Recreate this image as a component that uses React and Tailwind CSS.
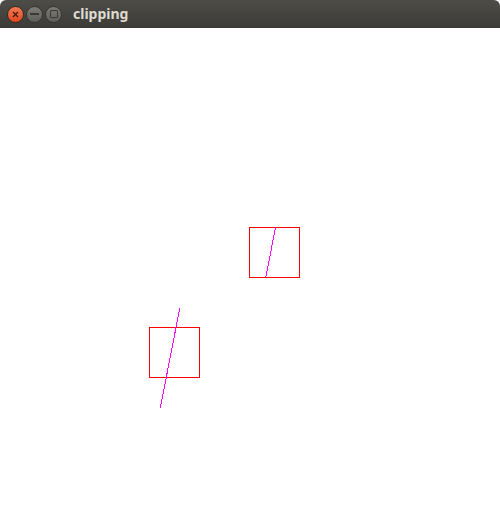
export default function App() {
  return (
    <div className="w-[500px] h-[528px] flex flex-col bg-white overflow-hidden">
      <div className="h-[28px] shrink-0 rounded-t-[6px] bg-gradient-to-b from-[#4d4c47] to-[#3c3b37] flex items-center pl-[7px]">
        <div className="flex items-center gap-[2px]">
          <div className="w-[17px] h-[17px] rounded-full bg-gradient-to-b from-[#f37b52] to-[#e0461c] border border-[#3a2a22] flex items-center justify-center">
            <svg width="7" height="7" viewBox="0 0 7 7">
              <path d="M1 1L6 6M6 1L1 6" stroke="#4a1a0c" strokeWidth="1.4" />
            </svg>
          </div>
          <div className="w-[17px] h-[17px] rounded-full bg-gradient-to-b from-[#7d7c77] to-[#5e5d59] border border-[#35342f] flex items-center justify-center">
            <div className="w-[9px] h-[2px] bg-[#3a3935]" />
          </div>
          <div className="w-[17px] h-[17px] rounded-full bg-gradient-to-b from-[#7d7c77] to-[#5e5d59] border border-[#35342f] flex items-center justify-center">
            <div className="w-[8px] h-[8px] border-[1.5px] border-[#3a3935] rounded-[1px]" />
          </div>
        </div>
        <span className="ml-[11px] text-[14px] font-bold text-[#dfdbd2] leading-none" style={{ fontFamily: '"Noto Sans", "DejaVu Sans", sans-serif' }}>
          clipping
        </span>
      </div>
      <svg width="500" height="500" className="block" viewBox="0 0 500 500">
        <rect x="249.5" y="199.5" width="50" height="50" fill="none" stroke="#ff0000" strokeWidth="1" shapeRendering="crispEdges" />
        <line x1="275.5" y1="199.5" x2="265.8" y2="249.5" stroke="#ff00ff" strokeWidth="1" shapeRendering="crispEdges" />
        <rect x="149.5" y="299.5" width="50" height="50" fill="none" stroke="#ff0000" strokeWidth="1" shapeRendering="crispEdges" />
        <line x1="179.8" y1="280" x2="160.3" y2="380" stroke="#ff00ff" strokeWidth="1" shapeRendering="crispEdges" />
      </svg>
    </div>
  );
}
